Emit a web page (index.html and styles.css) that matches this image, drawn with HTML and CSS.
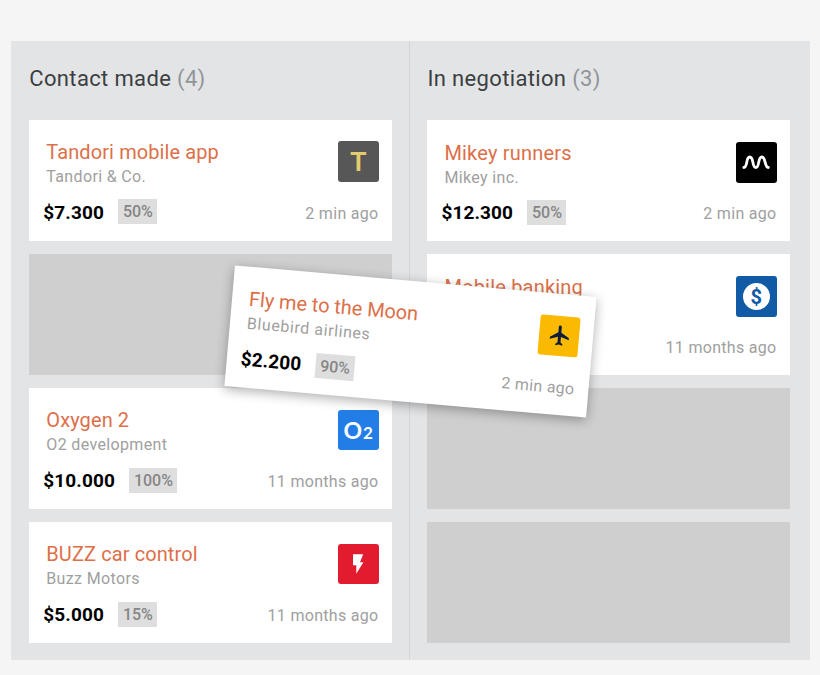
FILE: index.html
```html
<!DOCTYPE html>
<html lang="en">
<head>
    <meta charset="UTF-8">
    <meta name="viewport" content="width=device-width, initial-scale=1">
    <title>Deals</title>
    <link rel="stylesheet" href="styles.css">
</head>
<body>

<div class="board">
    <div class="column">
        <h2 class="column-title">Contact made <span class="count">(4)</span></h2>
        <div class="card">
            <div class="card-top">
                <div>
                    <h3 class="name">Tandori mobile app</h3>
                    <p class="company">Tandori &amp; Co.</p>
                </div>
                <div class="logo logo-tandori">T</div>
            </div>
            <div class="card-bottom">
                <span class="price">$7.300</span>
                <span class="percent">50%</span>
                <span class="time">2 min ago</span>
            </div>
        </div>
        <div class="slot"></div>
        <div class="card">
            <div class="card-top">
                <div>
                    <h3 class="name">Oxygen 2</h3>
                    <p class="company">O2 development</p>
                </div>
                <div class="logo logo-oxygen">O<small>2</small></div>
            </div>
            <div class="card-bottom">
                <span class="price">$10.000</span>
                <span class="percent">100%</span>
                <span class="time">11 months ago</span>
            </div>
        </div>
        <div class="card">
            <div class="card-top">
                <div>
                    <h3 class="name">BUZZ car control</h3>
                    <p class="company">Buzz Motors</p>
                </div>
                <div class="logo logo-buzz">
                    <svg width="40" height="40" viewBox="0 0 40 40"><path d="M15 10.300h10.200l-3.200 8h3.400L18.300 29.800V21.200H15z" fill="#fff"/></svg>
                </div>
            </div>
            <div class="card-bottom">
                <span class="price">$5.000</span>
                <span class="percent">15%</span>
                <span class="time">11 months ago</span>
            </div>
        </div>
    </div>

    <div class="column column-right">
        <h2 class="column-title">In negotiation <span class="count">(3)</span></h2>
        <div class="card">
            <div class="card-top">
                <div>
                    <h3 class="name">Mikey runners</h3>
                    <p class="company">Mikey inc.</p>
                </div>
                <div class="logo logo-mikey">
                    <svg width="40" height="40" viewBox="0 0 40 40"><path d="M7.800 25.500C12 25.500 9.500 15 13.800 15s2 10.500 6 10.500S21.500 15 25.800 15s2.500 10.500 6.500 10.500" fill="none" stroke="#fff" stroke-width="2.800" stroke-linecap="round"/></svg>
                </div>
            </div>
            <div class="card-bottom">
                <span class="price">$12.300</span>
                <span class="percent">50%</span>
                <span class="time">2 min ago</span>
            </div>
        </div>
        <div class="card">
            <div class="card-top">
                <div>
                    <h3 class="name">Mobile banking</h3>
                </div>
                <div class="logo logo-bank"><span class="coin">$</span></div>
            </div>
            <div class="card-bottom">
                <span class="time">11 months ago</span>
            </div>
        </div>
        <div class="slot"></div>
        <div class="slot"></div>
    </div>

    <!-- card being dragged -->
    <div class="card dragging">
        <div class="card-top">
            <div>
                <h3 class="name">Fly me to the Moon</h3>
                <p class="company">Bluebird airlines</p>
            </div>
            <div class="logo logo-plane">
                <svg width="40" height="40" viewBox="0 0 40 40"><path d="M30 23.500v-2l-8-5v-5.500a1.500 1.500 0 0 0-3 0v5.500l-8 5v2l8-2.500v5.500l-2 1.500v1.500l3.500-1 3.500 1V28l-2-1.500V21z" fill="#0c1d3d"/></svg>
            </div>
        </div>
        <div class="card-bottom">
            <span class="price">$2.200</span>
            <span class="percent">90%</span>
            <span class="time">2 min ago</span>
        </div>
    </div>
</div>

</body>
</html>
```

FILE: styles.css
```css
* {
    margin: 0;
    padding: 0;
    box-sizing: border-box;
}
body {
    background: #f5f5f5;
    font-family: Roboto, "Liberation Sans", sans-serif;
    overflow: hidden;
}
.board {
    position: relative;
    display: flex;
    width: 799px;
    height: 619px;
    margin: 41px 0 0 11px;
    background: #e2e4e6;
}
.column {
    display: flex;
    flex-direction: column;
    gap: 13.2px;
    width: 399px;
    padding: 20px 17px 0 18.3px;
    border-right: 1px solid #d3d5d6;
}
.column-right {
    width: 400px;
    padding: 20px 20px 0 17.4px;
    border-right: 0;
}
.column-title {
    height: 45.5px;
    font-size: 22px;
    line-height: 36px;
    font-weight: 400;
    letter-spacing: 0.35px;
    color: #3c3f41;
}
.count {
    color: #929496;
}
.card,
.slot {
    height: 121px;
    background: #fff;
}
.slot {
    background: #cfcfcf;
}
.card {
    display: flex;
    flex-direction: column;
    justify-content: space-between;
    padding: 20px 13.5px 16.5px 14px;
}
.column-right .card {
    padding-top: 21px;
    padding-bottom: 16px;
}
.card-top {
    display: flex;
    justify-content: space-between;
    padding-left: 3px;
}
.name {
    font-size: 20px;
    line-height: 24px;
    font-weight: 400;
    letter-spacing: 0.1px;
    color: #dd6f49;
}
.company {
    font-size: 16px;
    line-height: 25px;
    letter-spacing: 0.35px;
    color: #a0a0a0;
}
.column-right .name {
    letter-spacing: 0.2px;
}
.dragging .name {
    letter-spacing: -0.05px;
}
.dragging .company {
    letter-spacing: 0.6px;
}
.card-bottom {
    display: flex;
    align-items: center;
    height: 25px;
}
.price {
    margin-right: 14px;
    padding-top: 1px;
    font-size: 19px;
    font-weight: 700;
    letter-spacing: 0.1px;
    color: #000;
}
.percent {
    padding: 0 4px 0 5px;
    font-size: 16px;
    line-height: 25px;
    font-weight: 500;
    background: #dedede;
    color: #868686;
}
.time {
    margin-left: auto;
    padding-top: 3px;
    font-size: 16px;
    letter-spacing: 0.3px;
    color: #a0a0a0;
}

/* logos */
.logo {
    display: flex;
    align-items: center;
    justify-content: center;
    width: 40.5px;
    height: 40.5px;
    margin-top: 1.5px;
    border-radius: 3px;
    font-family: Lato, sans-serif;
    font-weight: 700;
}
.logo-tandori {
    padding-bottom: 2px;
    background: #575757;
    color: #e3cc6c;
    font-size: 27px;
}
.logo-oxygen {
    align-items: baseline;
    background: #237de6;
    color: #fff;
    font-size: 23px;
    line-height: 40px;
}
.logo-oxygen small {
    margin-left: 1px;
    font-size: 17px;
}
.logo-buzz {
    background: #e31b2e;
}
.logo-mikey {
    background: #000;
}
.logo-bank {
    background: #115aa6;
}
.logo-plane {
    background: #fbb900;
}
.coin {
    width: 27px;
    height: 27px;
    border-radius: 50%;
    background: #fff;
    color: #115aa6;
    font-family: Roboto, sans-serif;
    font-size: 20px;
    line-height: 28px;
    text-align: center;
}

.dragging {
    position: absolute;
    left: 218.200px;
    top: 239.700px;
    width: 362.500px;
    transform: rotate(5deg);
    box-shadow: 0 3px 12px rgba(0, 0, 0, .32);
}
```
